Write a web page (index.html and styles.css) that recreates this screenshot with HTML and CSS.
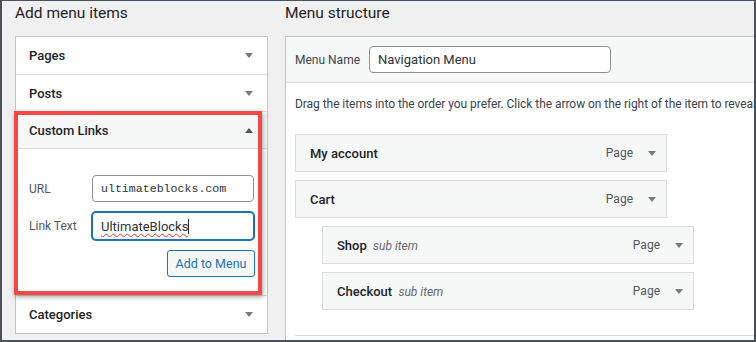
FILE: index.html
```html
<!DOCTYPE html>
<html>
<head>
<meta charset="utf-8">
<link rel="stylesheet" href="styles.css">
</head>
<body>
<div class="frame">
  <div class="col-left">
    <h2 class="heading">Add menu items</h2>
    <div class="accordion">
      <div class="sec">
        <div class="sec-title">Pages<span class="arrow down"></span></div>
      </div>
      <div class="sec">
        <div class="sec-title short">Posts<span class="arrow down"></span></div>
      </div>
      <div class="sec open">
        <div class="sec-title">Custom Links<span class="arrow up"></span></div>
        <div class="sec-body">
          <div class="field">
            <span class="label">URL</span>
            <div class="input mono">ultimateblocks.com</div>
          </div>
          <div class="field">
            <span class="label">Link Text</span>
            <div class="input focus"><span class="typo">UltimateBlocks</span><span class="caret"></span></div>
          </div>
          <div class="actions"><span class="btn">Add to Menu</span></div>
        </div>
      </div>
      <div class="sec last">
        <div class="sec-title">Categories<span class="arrow down"></span></div>
      </div>
    </div>
    <div class="highlight"></div>
  </div>
  <div class="col-right">
    <h2 class="heading">Menu structure</h2>
    <div class="panel">
      <div class="panel-head">
        <span class="name-label">Menu Name</span>
        <div class="input name-input">Navigation Menu</div>
      </div>
      <div class="panel-body">
        <p class="desc">Drag the items into the order you prefer. Click the arrow on the right of the item to reveal additional configuration options.</p>
        <div class="items">
          <div class="item"><span class="item-title">My account</span><span class="item-type">Page</span><span class="arrow down"></span></div>
          <div class="item"><span class="item-title">Cart</span><span class="item-type">Page</span><span class="arrow down"></span></div>
          <div class="item sub"><span class="item-title">Shop <em>sub item</em></span><span class="item-type">Page</span><span class="arrow down"></span></div>
          <div class="item sub"><span class="item-title">Checkout <em>sub item</em></span><span class="item-type">Page</span><span class="arrow down"></span></div>
        </div>
      </div>
      <div class="panel-foot"></div>
    </div>
  </div>
</div>
</body>
</html>
```
FILE: styles.css
```css
* { box-sizing: border-box; }
html, body { margin: 0; padding: 0; }
body {
  width: 756px;
  height: 342px;
  overflow: hidden;
  font-family: Roboto, "Open Sans", sans-serif;
  color: #1d2327;
}
.frame {
  width: 756px;
  height: 342px;
  background: #f0f0f1;
  border: 2px solid #4a5159;
  border-top-width: 1px;
  display: flex;
  overflow: hidden;
}
.col-left {
  position: relative;
  width: 253px;
  margin-left: 13px;
  flex: none;
}
.col-right {
  margin-left: 17px;
  flex: 1;
  min-width: 0;
}
.heading {
  margin: 0;
  height: 35px;
  line-height: 24px;
  font-size: 15.5px;
  font-weight: 400;
  color: #1d2327;
}
.accordion {
  background: #fff;
  border: 1px solid #c3c4c7;
}
.sec { border-bottom: 1px solid #dcdcde; }
.sec.last { border-bottom: none; }
.sec-title {
  height: 37px;
  display: flex;
  align-items: center;
  justify-content: space-between;
  padding: 0 14px 0 13px;
  font-size: 13px;
  font-weight: 500;
  color: #1d2327;
}
.sec-title.short { height: 36px; }
.sec.open .sec-title {
  background: #f6f7f7;
  border-bottom: 1px solid #dcdcde;
}
.arrow {
  width: 0;
  height: 0;
  border-left: 4px solid transparent;
  border-right: 4px solid transparent;
}
.arrow.down { border-top: 5px solid #787c82; }
.arrow.up { border-bottom: 5px solid #50575e; }
.sec-body {
  padding: 26px 12px 0 13px;
  height: 146px;
}
.field {
  display: flex;
  align-items: center;
  margin-bottom: 10px;
}
.label {
  width: 63px;
  font-size: 12px;
  color: #50575e;
}
.input {
  flex: none;
  width: 162px;
  height: 27px;
  border: 1px solid #8c8f94;
  border-radius: 4px;
  display: flex;
  align-items: center;
  padding: 0 8px;
  font-size: 13px;
  color: #2c3338;
  background: #fff;
}
.mono {
  font-family: "Liberation Mono", "DejaVu Sans Mono", monospace;
  font-size: 11.6px;
}
.input.focus {
  height: 28px;
  border-color: #2271b1;
  box-shadow: 0 0 0 1px #2271b1;
}
.typo {
  text-decoration: underline wavy #e03030;
  text-decoration-thickness: 1px;
  text-underline-offset: 2px;
}
.caret {
  display: inline-block;
  width: 1px;
  height: 15px;
  background: #1d2327;
}
.actions {
  display: flex;
  justify-content: flex-end;
  margin-top: 2px;
}
.btn {
  display: inline-flex;
  align-items: center;
  justify-content: center;
  width: 88px;
  height: 27px;
  border: 1px solid #2271b1;
  border-radius: 3px;
  background: #f6f7f7;
  color: #2271b1;
  font-size: 12.5px;
}
.highlight {
  position: absolute;
  left: -1px;
  top: 110px;
  width: 248px;
  height: 184px;
  border: 4px solid #f24848;
  box-shadow: 1px 2px 5px rgba(0, 0, 0, 0.35);
  pointer-events: none;
}
.panel {
  background: #fff;
  border: 1px solid #c3c4c7;
  border-right: none;
  width: 520px;
  height: 320px;
}
.panel-head {
  height: 46px;
  background: #f6f7f7;
  border-bottom: 1px solid #dcdcde;
  display: flex;
  align-items: center;
  padding-left: 9px;
}
.name-label {
  font-size: 12px;
  color: #3c434a;
  margin-right: 9px;
}
.name-input {
  width: 242px;
  height: 27px;
  font-size: 13px;
  color: #2c3338;
}
.panel-body {
  padding: 0 0 0 9px;
  height: 252px;
}
.desc {
  margin: 0;
  padding-top: 14px;
  height: 51px;
  font-size: 12px;
  letter-spacing: -0.05px;
  color: #3c434a;
  white-space: nowrap;
}
.items { display: flex; flex-direction: column; gap: 8px; }
.item {
  width: 372px;
  height: 38px;
  background: #f6f7f7;
  border: 1px solid #dcdcde;
  display: flex;
  align-items: center;
  padding: 0 10px 0 14px;
}
.item.sub { margin-left: 27px; }
.item-title {
  flex: 1;
  font-size: 13px;
  font-weight: 500;
  color: #1d2327;
}
.item-title em {
  font-weight: 400;
  font-style: italic;
  color: #646970;
  font-size: 12px;
  margin-left: 3px;
}
.item-type {
  font-size: 12px;
  color: #50575e;
  margin-right: 15px;
}
.panel-foot {
  margin-left: 9px;
  border-top: 1px solid #dcdcde;
}
```
